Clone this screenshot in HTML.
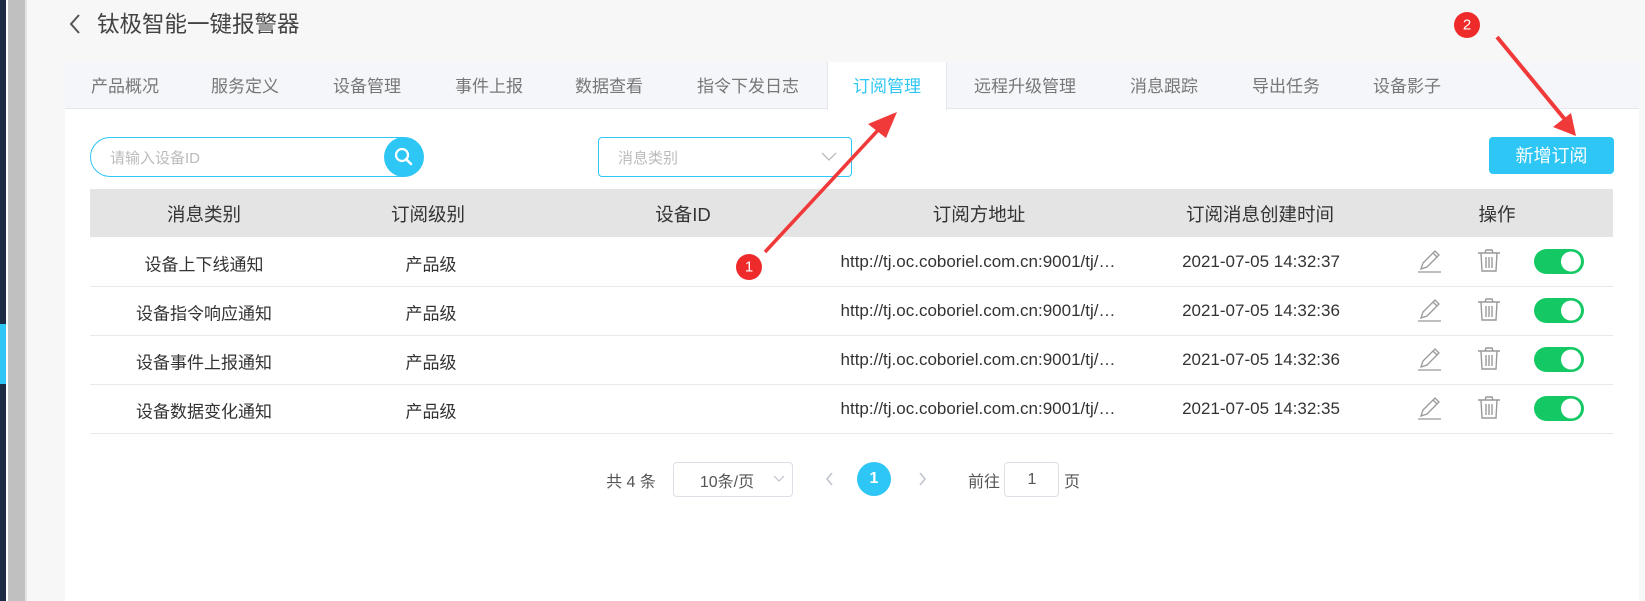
<!DOCTYPE html>
<html><head><meta charset="utf-8"><style>
*{margin:0;padding:0;box-sizing:border-box}
body{width:1645px;height:601px;overflow:hidden;background:#f7f7f8;font-family:"Liberation Sans","Noto Sans CJK SC",sans-serif;position:relative}
.a{position:absolute}
.tab{position:absolute;top:62px;height:47px;line-height:50px;font-size:17px;color:#777;transform:translateX(-50%);white-space:nowrap}
.cell{position:absolute;transform:translate(-50%,-50%);white-space:nowrap;color:#333}
.hd{font-size:18.5px;color:#333}
.bd{font-size:17px}
.line{position:absolute;left:90px;width:1523px;height:1px;background:#e8e8ee}
</style></head><body>
<div class="a" style="left:0;top:0;width:6px;height:601px;background:#1e2b45"></div>
<div class="a" style="left:0;top:324px;width:6px;height:60px;background:#2ec6f4"></div>
<div class="a" style="left:6px;top:0;width:2px;height:601px;background:#fff"></div>
<div class="a" style="left:8px;top:0;width:17px;height:601px;background:#c0c0c0"></div>
<div class="a" style="left:25px;top:0;width:2px;height:601px;background:#e4e4e4"></div>
<svg class="a" style="left:68px;top:13px" width="14" height="22"><path d="M11 2 L3 11 L11 20" fill="none" stroke="#555" stroke-width="2"/></svg>
<div class="a" style="left:97px;top:10px;font-size:22.5px;color:#444;line-height:30px">钛极智能一键报警器</div>
<div class="a" style="left:65px;top:62px;width:1574px;height:539px;background:#fff"></div>
<div class="a" style="left:65px;top:62px;width:1574px;height:47px;background:#f4f6f9;border-bottom:1px solid #e4e7ed"></div>
<div class="a" style="left:827px;top:62px;width:120px;height:48px;background:#fff;border-left:1px solid #e4e7ed;border-right:1px solid #e4e7ed"></div>
<div class="tab" style="left:125px">产品概况</div>
<div class="tab" style="left:245px">服务定义</div>
<div class="tab" style="left:367px">设备管理</div>
<div class="tab" style="left:489px">事件上报</div>
<div class="tab" style="left:609px">数据查看</div>
<div class="tab" style="left:748px">指令下发日志</div>
<div class="tab" style="left:887px;color:#2ec6f4">订阅管理</div>
<div class="tab" style="left:1025px">远程升级管理</div>
<div class="tab" style="left:1164px">消息跟踪</div>
<div class="tab" style="left:1286px">导出任务</div>
<div class="tab" style="left:1407px">设备影子</div>
<div class="a" style="left:90px;top:137px;width:333px;height:40px;border:1px solid #2ec6f4;border-radius:20px"></div>
<div class="a" style="left:110px;top:147px;font-size:15px;color:#bbb">请输入设备ID</div>
<div class="a" style="left:384px;top:137px;width:40px;height:40px;border-radius:20px;background:#2ec6f4"></div>
<svg class="a" style="left:392px;top:145px" width="24" height="24"><circle cx="10" cy="10" r="6" fill="none" stroke="#fff" stroke-width="2.2"/><path d="M14 14 L19 19" stroke="#fff" stroke-width="2.6" stroke-linecap="round"/></svg>
<div class="a" style="left:598px;top:137px;width:254px;height:40px;border:1px solid #2ec6f4;border-radius:4px"></div>
<div class="a" style="left:618px;top:147px;font-size:15px;color:#bbb">消息类别</div>
<svg class="a" style="left:821px;top:152px" width="16" height="10"><path d="M1 1 L8 8 L15 1" fill="none" stroke="#bbb" stroke-width="1.3"/></svg>
<div class="a" style="left:1489px;top:137px;width:125px;height:37px;background:#2ec6f4;border-radius:4px;color:#fff;font-size:18px;text-align:center;line-height:38px">新增订阅</div>
<div class="a" style="left:90px;top:189px;width:1523px;height:48px;background:#e4e4e4"></div>
<div class="cell hd" style="left:204px;top:214px">消息类别</div>
<div class="cell hd" style="left:428px;top:214px">订阅级别</div>
<div class="cell hd" style="left:683px;top:214px">设备ID</div>
<div class="cell hd" style="left:979px;top:214px">订阅方地址</div>
<div class="cell hd" style="left:1260px;top:214px">订阅消息创建时间</div>
<div class="cell hd" style="left:1497px;top:214px">操作</div>

<div class="cell bd" style="left:204px;top:263px">设备上下线通知</div>
<div class="cell bd" style="left:204px;top:312px">设备指令响应通知</div>
<div class="cell bd" style="left:204px;top:361px">设备事件上报通知</div>
<div class="cell bd" style="left:204px;top:410px">设备数据变化通知</div>
<div class="cell bd" style="left:431px;top:263px">产品级</div>
<div class="cell bd" style="left:431px;top:312px">产品级</div>
<div class="cell bd" style="left:431px;top:361px">产品级</div>
<div class="cell bd" style="left:431px;top:410px">产品级</div>
<div class="cell bd" style="left:978px;top:262px">http://tj.oc.coboriel.com.cn:9001/tj/…</div>
<div class="cell bd" style="left:978px;top:311px">http://tj.oc.coboriel.com.cn:9001/tj/…</div>
<div class="cell bd" style="left:978px;top:360px">http://tj.oc.coboriel.com.cn:9001/tj/…</div>
<div class="cell bd" style="left:978px;top:409px">http://tj.oc.coboriel.com.cn:9001/tj/…</div>
<div class="cell bd" style="left:1261px;top:262px">2021-07-05 14:32:37</div>
<div class="cell bd" style="left:1261px;top:311px">2021-07-05 14:32:36</div>
<div class="cell bd" style="left:1261px;top:360px">2021-07-05 14:32:36</div>
<div class="cell bd" style="left:1261px;top:409px">2021-07-05 14:32:35</div>
<div class="line" style="top:286px"></div>
<div class="line" style="top:335px"></div>
<div class="line" style="top:384px"></div>
<div class="line" style="top:433px"></div>

<svg class="a" style="left:0;top:0" width="1645" height="601">
<defs><g id="ic">
<path d="M3 20 L5 14 L17 2 L21 6 L9 18 Z M15 4 L19 8" fill="none" stroke="#999" stroke-width="1.3"/>
<path d="M0 23 L23 23" stroke="#999" stroke-width="1.3"/>
<g transform="translate(60,0)"><path d="M0 4 L22 4 M7 4 L8 1 L14 1 L15 4 M3 4 L4 22 L18 22 L19 4 M8 8 L8 19 M11 8 L11 19 M14 8 L14 19" fill="none" stroke="#999" stroke-width="1.4"/></g>
<rect x="116" y="0" width="50" height="25" rx="12.5" fill="#14c864"/><circle cx="153" cy="12.5" r="10" fill="#fff"/>
</g></defs>
<use href="#ic" x="1418" y="249"/>
<use href="#ic" x="1418" y="298"/>
<use href="#ic" x="1418" y="347"/>
<use href="#ic" x="1418" y="396"/>
<path d="M832 473 L827 479 L832 485" fill="none" stroke="#c0c4cc" stroke-width="1.6"/>
<path d="M920 473 L925 479 L920 485" fill="none" stroke="#c0c4cc" stroke-width="1.6"/>
<circle cx="874" cy="479" r="17" fill="#2ec6f4"/>
<path d="M765 252 L880 128" stroke="#f03a3a" stroke-width="3.5"/>
<path d="M897 112 L868 124 L886 138 Z" fill="#f03a3a"/>
<circle cx="749" cy="267" r="13" fill="#ee2a2a"/>
<path d="M1497 37 L1567 122" stroke="#f03a3a" stroke-width="4"/>
<path d="M1576 136 L1553 127 L1571 113 Z" fill="#f03a3a"/>
<circle cx="1467" cy="25" r="13" fill="#ee2a2a"/>
</svg>
<div class="cell" style="left:749px;top:267px;color:#fff;font-size:15px">1</div>
<div class="cell" style="left:1467px;top:25px;color:#fff;font-size:15px">2</div>
<div class="cell" style="left:874px;top:479px;color:#fff;font-size:16px;font-weight:bold">1</div>
<div class="cell" style="left:631px;top:480px;font-size:16px;color:#555">共 4 条</div>
<div class="a" style="left:673px;top:462px;width:120px;height:35px;border:1px solid #dcdfe6;border-radius:4px"></div>
<div class="cell" style="left:727px;top:480px;font-size:16px;color:#555">10条/页</div>
<svg class="a" style="left:773px;top:475px" width="12" height="8"><path d="M1 1 L6 6 L11 1" fill="none" stroke="#c0c4cc" stroke-width="1.2"/></svg>
<div class="cell" style="left:984px;top:480px;font-size:16px;color:#555">前往</div>
<div class="a" style="left:1004px;top:462px;width:55px;height:35px;border:1px solid #dcdfe6;border-radius:4px"></div>
<div class="cell" style="left:1032px;top:480px;font-size:16px;color:#555">1</div>
<div class="cell" style="left:1072px;top:480px;font-size:16px;color:#555">页</div>
</body></html>
